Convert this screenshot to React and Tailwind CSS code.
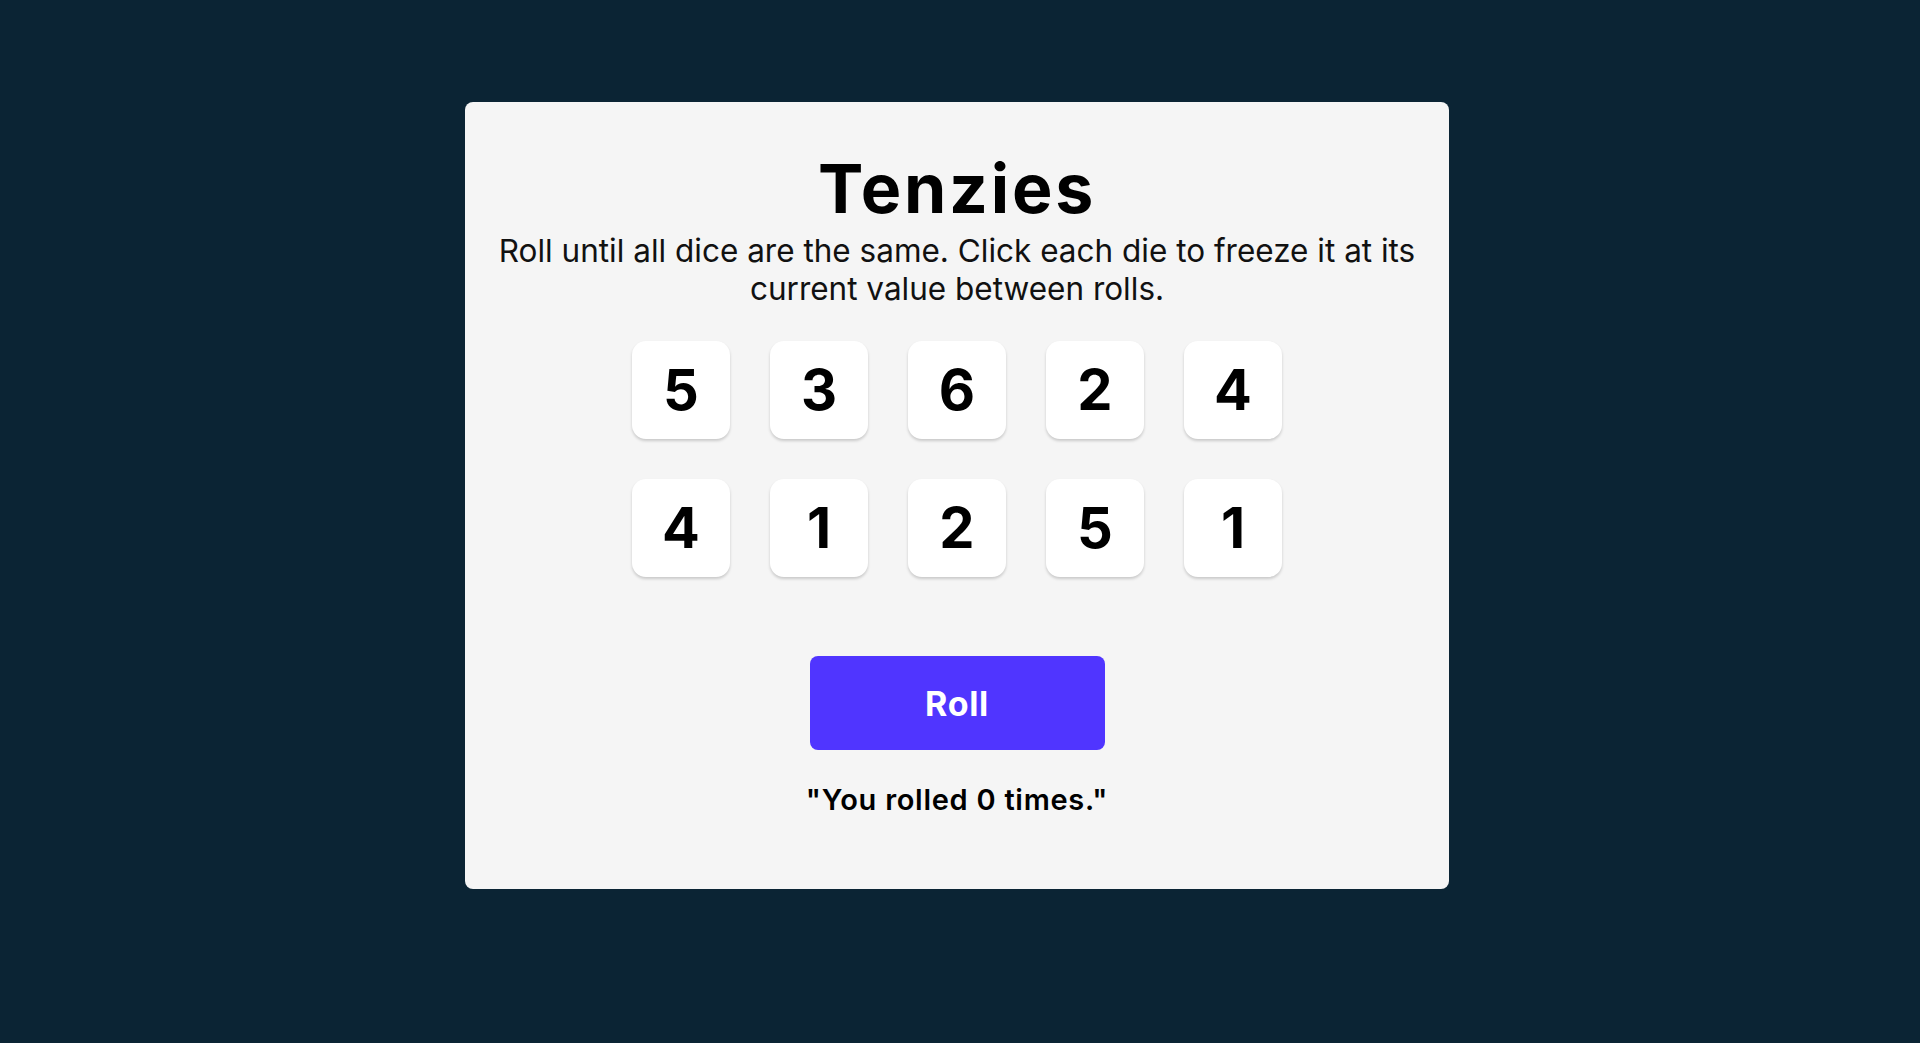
import React, { useState } from "react";

const START = [5, 3, 6, 2, 4, 4, 1, 2, 5, 1];

const Die = ({ value, held, onClick }) => (
  <button
    onClick={onClick}
    className={`w-[98px] h-[98px] rounded-[14px] shadow-[0_2px_3px_rgba(0,0,0,0.18)] flex items-center justify-center text-[56px] font-bold leading-none text-black ${
      held ? "bg-[#59E391]" : "bg-white"
    }`}
  >
    {value}
  </button>
);

const App = () => {
  const [dice, setDice] = useState(START.map((v) => ({ value: v, held: false })));
  const [rolls, setRolls] = useState(0);

  const toggle = (i) =>
    setDice((prev) => prev.map((d, j) => (j === i ? { ...d, held: !d.held } : d)));

  const roll = () => {
    setDice((prev) =>
      prev.map((d) => (d.held ? d : { ...d, value: Math.ceil(Math.random() * 6) }))
    );
    setRolls((r) => r + 1);
  };

  return (
    <div
      className="min-h-screen bg-[#0B2434] flex justify-center pt-[102px] pr-[6px]"
      style={{ fontFamily: "Inter, 'Noto Sans', sans-serif" }}
    >
      <main className="w-[984px] h-[787px] bg-[#F5F5F5] rounded-[8px] flex flex-col items-center pt-[52px]">
        <h1 className="text-[68px] font-bold leading-none tracking-[0.04em] text-black">Tenzies</h1>
        <p className="mt-[10px] text-[31.5px] leading-[38px] text-center text-[#111] px-[20px]">
          Roll until all dice are the same. Click each die to freeze it at its current value between
          rolls.
        </p>
        <div className="mt-[33px] grid grid-cols-5 gap-[40px]">
          {dice.map((d, i) => (
            <Die key={i} value={d.value} held={d.held} onClick={() => toggle(i)} />
          ))}
        </div>
        <button
          onClick={roll}
          className="mt-[79px] w-[295px] h-[94px] rounded-[8px] bg-[#5035FF] text-white text-[34px] font-bold tracking-[0.02em]"
        >
          Roll
        </button>
        <p className="mt-[35px] text-[29px] font-semibold leading-none tracking-[0.025em] text-black">
          "You rolled {rolls} times."
        </p>
      </main>
    </div>
  );
};

export default App;
